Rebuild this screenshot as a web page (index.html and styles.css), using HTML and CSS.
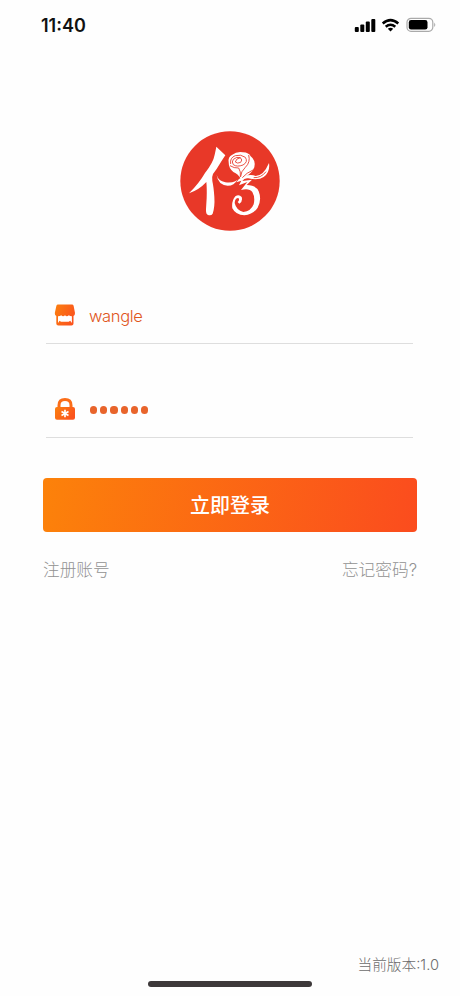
FILE: index.html
```html
<!DOCTYPE html>
<html lang="zh-CN">
<head>
    <meta charset="UTF-8">
    <meta name="viewport" content="width=device-width, initial-scale=1.0">
    <title>登录</title>
    <link rel="stylesheet" href="styles.css">
</head>
<body>
    <div class="page">
        <div class="status-bar">
            <span class="time">11:40</span>
            <svg class="status-icons" viewBox="0 0 83 16" width="83" height="16">
                <rect x="0.8" y="10" width="4" height="5" rx="1"/>
                <rect x="6.3" y="7.5" width="4" height="7.5" rx="1"/>
                <rect x="11.8" y="4.6" width="4" height="10.4" rx="1"/>
                <rect x="17.3" y="2" width="4" height="13" rx="1"/>
                <g class="wifi">
                    <path d="M28.7 6.5Q36.5-.3 44.3 6.5"/>
                    <path d="M31.7 9.8Q36.5 5.7 41.3 9.8"/>
                </g>
                <path d="M33.8 11.8Q36.5 9.6 39.2 11.8L36.5 14.6Z"/>
                <rect class="battery-case" x="53" y="1.3" width="25.8" height="13" rx="4"/>
                <rect x="54.8" y="3.1" width="18.7" height="9.4" rx="2.3"/>
                <path class="battery-tip" d="M80.2 5.4Q82.4 7.7 80.2 10Z"/>
            </svg>
        </div>

        <svg class="logo" viewBox="30 28 300 300" width="100" height="100">
            <circle class="logo-bg" cx="180" cy="178" r="149"/>
            <path d="M139 75Q152 87 166 101Q160 110 151 124Q140 143 129 157Q125 165 127 178Q131 196 133 225Q135 255 128 276Q124 283 114 280Q107 278 108 263L110 229Q111 199 109 181Q88 204 57 215Q88 184 105 154Q130 122 134 99Q137 86 139 75Z"/>
            <path d="M140 160Q145 178 166 182Q184 184 196 179L202 174Q193 192 173 192Q144 190 140 160Z"/>
            <path d="M176 122Q173 106 187 99Q200 89 219 92Q237 93 242 104Q258 116 253 137Q246 157 213 173Q205 157 190 151Q176 140 176 122Z"/>
            <path d="M297 124Q301 151 281 166Q265 177 235 170Q223 168 217 178L246 174L230 190Q258 190 266 209Q276 234 263 258Q249 279 223 281Q197 280 187 260Q184 238 196 224Q207 217 215 226Q219 239 208 246L203 241Q210 235 205 229Q195 229 194 244Q199 266 220 271Q243 269 251 248Q256 227 247 211Q237 198 213 205L232 181L207 191L214 177L199 182Q208 169 222 164Q243 157 257 163Q281 162 297 124Z"/>
            <g class="petals">
                <path d="M182 127Q179 108 196 102Q213 97 226 107Q235 121 219 130Q201 137 190 129Q184 121 190 113Q200 104 211 108Q219 115 212 122Q202 127 196 121Q198 110 211 108"/>
                <path d="M180 132Q192 140 206 139Q213 149 211 166"/>
                <path d="M212 165Q212 150 226 137Q242 122 236 100"/>
                <path d="M217 168Q230 153 249 145"/>
                <path d="M251 168Q274 169 288 150"/>
            </g>
        </svg>

        <div class="form">
            <div class="field">
                <svg class="icon" viewBox="0 0 22 22" width="22" height="22">
                    <defs>
                        <linearGradient id="orange" x1="0" y1="0" x2="1" y2="0.5">
                            <stop offset="0" stop-color="#fb800f"/>
                            <stop offset="1" stop-color="#fb541d"/>
                        </linearGradient>
                    </defs>
                    <path fill="url(#orange)" d="M4 0.5H18Q19.2 0.5 19.6 1.7L21 9Q21 11.5 19.5 12V19.5Q19.5 21.5 17.5 21.5H4.3Q2.3 21.5 2.3 19.5V12Q0.7 11.3 0.8 9L2.4 1.7Q2.8 0.5 4 0.5Z"/>
                    <path class="cutout" d="M4 12.3Q6.2 12.3 7.2 11.3Q9 13 11 11.3Q13 13 14.8 11.3Q16 12.3 17.9 12.3V19L16.2 16.8L14.7 17.8H7L5.6 16.8L4 19Z"/>
                </svg>
                <span class="value">wangle</span>
            </div>
            <div class="field">
                <svg class="icon" viewBox="0 0 22 22" width="22" height="22">
                    <path class="shackle" d="M5 10V7.2Q5 1.5 11 1.5Q17 1.5 17 7.2V10"/>
                    <rect fill="url(#orange)" x="1" y="9" width="20" height="12.7" rx="2"/>
                    <path class="star" d="M11 11.8V19.2M7.5 13.5L14.5 17.5M14.5 13.5L7.5 17.5"/>
                </svg>
                <div class="dots">
                    <i></i><i></i><i></i><i></i><i></i><i></i>
                </div>
            </div>
            <button class="login-btn">立即登录</button>
            <div class="links">
                <span>注册账号</span>
                <span>忘记密码?</span>
            </div>
        </div>

        <div class="version">当前版本:1.0</div>
        <div class="home-bar"></div>
    </div>
</body>
</html>
```
FILE: styles.css
```css
body {
    margin: 0;
    background-color: #fefefe;
    font-family: Inter, "Noto Sans CJK SC", sans-serif;
}
.page {
    display: flex;
    flex-direction: column;
    box-sizing: border-box;
    height: 996px;
    padding-bottom: 9px;
}
.status-bar {
    display: flex;
    justify-content: space-between;
    align-items: center;
    height: 51px;
    padding: 0 23px 0 41px;
}
.time {
    font-size: 18px;
    font-weight: 600;
    line-height: 22px;
    color: #111;
}
.status-icons {
    fill: #000;
    margin-top: -1px;
}
.wifi {
    fill: none;
    stroke: #000;
    stroke-width: 2.5;
}
.battery-case {
    fill: none;
    stroke: #aaa;
    stroke-width: 1.2;
}
.battery-tip {
    fill: #aaa;
}
.logo {
    align-self: center;
    margin-top: 80px;
    fill: #fff;
}
.logo-bg {
    fill: #e83828;
}
.petals {
    fill: none;
    stroke: #e83828;
    stroke-width: 2.6;
}
.form {
    margin: 56px 43px 0;
}
.field {
    display: flex;
    align-items: center;
    box-sizing: border-box;
    height: 57px;
    margin: 0 4px 37px 3px;
    padding-left: 8px;
    border-bottom: 1px solid #dedede;
}
.icon {
    margin-right: 13px;
}
.value {
    padding-top: 1px;
    font-size: 16.5px;
    font-weight: 350;
    letter-spacing: -0.35px;
    color: #e0561c;
}
.cutout {
    fill: #fff;
}
.shackle {
    fill: none;
    stroke: #fb6d18;
    stroke-width: 3;
}
.star {
    stroke: #fff;
    stroke-width: 1.7;
}
.dots {
    display: flex;
    gap: 3px;
    padding: 2px 0 0 1px;
}
.dots i {
    width: 7.2px;
    height: 7.2px;
    border-radius: 50%;
    background-color: #e8642b;
}
.login-btn {
    display: block;
    width: 100%;
    height: 54px;
    margin-top: 40px;
    padding: 0 0 2px;
    border: none;
    border-radius: 4px;
    background: linear-gradient(100deg, #fc820a, #fb4c1e);
    color: #fff;
    font-family: inherit;
    font-size: 20px;
    font-weight: 500;
}
.links {
    display: flex;
    justify-content: space-between;
    margin-top: 26px;
    font-size: 16.7px;
    font-weight: 300;
    line-height: 25px;
    color: #929292;
}
.version {
    margin: auto 21px 5px auto;
    font-size: 14.7px;
    font-weight: 300;
    line-height: 22px;
    color: #6c6c6c;
}
.home-bar {
    align-self: center;
    width: 164px;
    height: 6px;
    border-radius: 3px;
    background-color: #3d393a;
}
```
